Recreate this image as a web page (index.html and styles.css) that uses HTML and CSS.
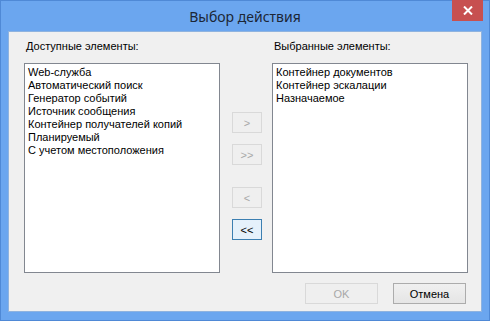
FILE: index.html
```html
<!DOCTYPE html>
<html>
	<head>
		<meta charset="utf-8">
		<title>Выбор действия</title>
		<link rel="stylesheet" href="styles.css">
	</head>
	<body>
		<div class="window">
			<div class="titlebar">
				<div class="title">Выбор действия</div>
				<div class="close">
					<svg width="10" height="9" viewBox="0 0 10 9"><path d="M1 0.5 L9 8.5 M9 0.5 L1 8.5" stroke="#fff" stroke-width="2"/></svg>
				</div>
			</div>
			<div class="client">
				<div class="columns">
					<div class="col">
						<div class="label">Доступные элементы:</div>
						<ul class="list">
							<li>Web-служба</li>
							<li>Автоматический поиск</li>
							<li>Генератор событий</li>
							<li>Источник сообщения</li>
							<li>Контейнер получателей копий</li>
							<li>Планируемый</li>
							<li>С учетом местоположения</li>
						</ul>
					</div>
					<div class="moves">
						<div class="btn disabled">&gt;</div>
						<div class="btn disabled">&gt;&gt;</div>
						<div class="btn disabled gap">&lt;</div>
						<div class="btn focus">&lt;&lt;</div>
					</div>
					<div class="col">
						<div class="label">Выбранные элементы:</div>
						<ul class="list">
							<li>Контейнер документов</li>
							<li>Контейнер эскалации</li>
							<li>Назначаемое</li>
						</ul>
					</div>
				</div>
				<div class="footer">
					<div class="btn wide disabled">OK</div>
					<div class="btn wide">Отмена</div>
				</div>
			</div>
		</div>
	</body>
</html>
```
FILE: styles.css
```css
*{
	margin: 0;
	padding: 0;
	box-sizing: border-box;
}
body{
	font-family: "Liberation Sans", Arial, sans-serif;
	font-size: 11px;
	color: #000;
}
.window{
	width: 490px;
	height: 321px;
	background-color: #6ba6ef;
	border: 1px solid #4f89d6;
	display: flex;
	flex-direction: column;
}
.titlebar{
	position: relative;
	height: 30px;
	display: flex;
	align-items: center;
	justify-content: center;
}
.title{
	font-family: "Noto Sans", sans-serif;
	font-size: 14px;
	color: #1c2636;
}
.close{
	position: absolute;
	right: 6px;
	top: -1px;
	width: 31px;
	height: 21px;
	background-color: #c75050;
	display: flex;
	align-items: center;
	justify-content: center;
}
.client{
	flex: 1;
	margin: 0 7px 8px;
	background-color: #f0f0f0;
	border: 1px solid #8fb3df;
	padding: 6px 13px 0 15px;
	display: flex;
	flex-direction: column;
}
.columns{
	display: flex;
}
.col{
	width: 196px;
	display: flex;
	flex-direction: column;
}
.label{
	height: 25px;
	line-height: 17px;
	padding-left: 2px;
}
.list{
	list-style: none;
	height: 210px;
	background-color: #fff;
	border: 1px solid #828790;
	padding: 2px 3px;
}
.list li{
	height: 13px;
	line-height: 13px;
	white-space: nowrap;
}
.moves{
	width: 30px;
	margin: 0 10px 0 12px;
	padding-top: 74px;
	display: flex;
	flex-direction: column;
	gap: 11px;
}
.moves .gap{
	margin-top: 11px;
}
.btn{
	height: 21px;
	border: 1px solid #acacac;
	background: linear-gradient(#f0f0f0, #e5e5e5);
	display: flex;
	align-items: center;
	justify-content: center;
}
.btn.disabled{
	border-color: #d9d9d9;
	background: #efefef;
	color: #a8a8a8;
}
.btn.focus{
	border-color: #3c7fb1;
	background: #e5f1fb;
}
.footer{
	display: flex;
	justify-content: flex-end;
	gap: 15px;
	padding-right: 2px;
	margin-top: 10px;
}
.btn.wide{
	width: 73px;
}
```
